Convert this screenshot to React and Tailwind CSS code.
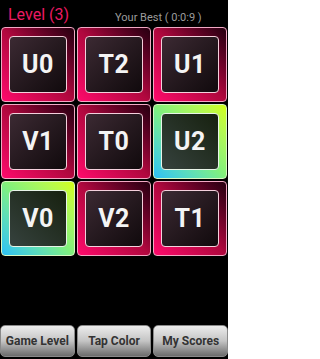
import React from 'react';

const tiles = [
  { label: 'U0', tone: 'pink' },
  { label: 'T2', tone: 'pink' },
  { label: 'U1', tone: 'pink' },
  { label: 'V1', tone: 'pink' },
  { label: 'T0', tone: 'pink' },
  { label: 'U2', tone: 'green' },
  { label: 'V0', tone: 'green' },
  { label: 'V2', tone: 'pink' },
  { label: 'T1', tone: 'pink' },
];

function Tile({ label, tone }) {
  const green = tone === 'green';
  return (
    <div
      className={
        green
          ? 'h-[75px] rounded-[4px] border border-[#d8f8c0] bg-linear-to-tr from-[#2cc0f6] via-[#80f07c] to-[#d2ff00] flex items-center justify-center'
          : 'h-[75px] rounded-[4px] border border-[#f2a8c4] bg-linear-to-tr from-[#ff0a6c] via-[#b0083e] to-[#260010] flex items-center justify-center'
      }
    >
      <div
        className={
          green
            ? 'w-[58px] h-[57px] rounded-[4px] border border-[#e8f4e8] bg-linear-to-tr from-[#36423e] to-[#17210f] flex items-center justify-center'
            : 'w-[58px] h-[57px] rounded-[4px] border border-[#f4d0dc] bg-linear-to-br from-[#3c2a33] to-[#110a0d] flex items-center justify-center'
        }
      >
        <span className="text-[25px] font-bold text-[#f4f4f4] leading-none tracking-[0.5px]">{label}</span>
      </div>
    </div>
  );
}

export default function App() {
  return (
    <div className="w-[228px] h-[359px] bg-black flex flex-col font-['Roboto','Liberation_Sans',sans-serif] overflow-hidden">
      {/* Header */}
      <div className="h-[26px] flex items-end pb-[3px]">
        <span className="pl-[8px] text-[16px] leading-none text-[#ea1a62]">Level (3)</span>
        <span className="ml-[46px] mb-[0px] text-[11px] leading-none text-[#9c9c9c]">Your Best ( 0:0:9 )</span>
      </div>

      {/* Tiles */}
      <div className="mt-[1px] pl-[1px] pr-[1px] grid grid-cols-3 gap-x-[2px] gap-y-[2px]">
        {tiles.map((t) => (
          <Tile key={t.label} {...t} />
        ))}
      </div>

      <div className="flex-1" />

      {/* Bottom buttons */}
      <div className="grid grid-cols-3 gap-x-[2px] pb-[2px]">
        {['Game Level', 'Tap Color', 'My Scores'].map((b) => (
          <button
            key={b}
            className="h-[32px] rounded-[5px] border border-[#8a8a8a] bg-linear-to-b from-[#ececec] via-[#c4c4c4] to-[#6c6c6c] text-[12px] font-bold text-[#333333]"
          >
            {b}
          </button>
        ))}
      </div>
    </div>
  );
}
